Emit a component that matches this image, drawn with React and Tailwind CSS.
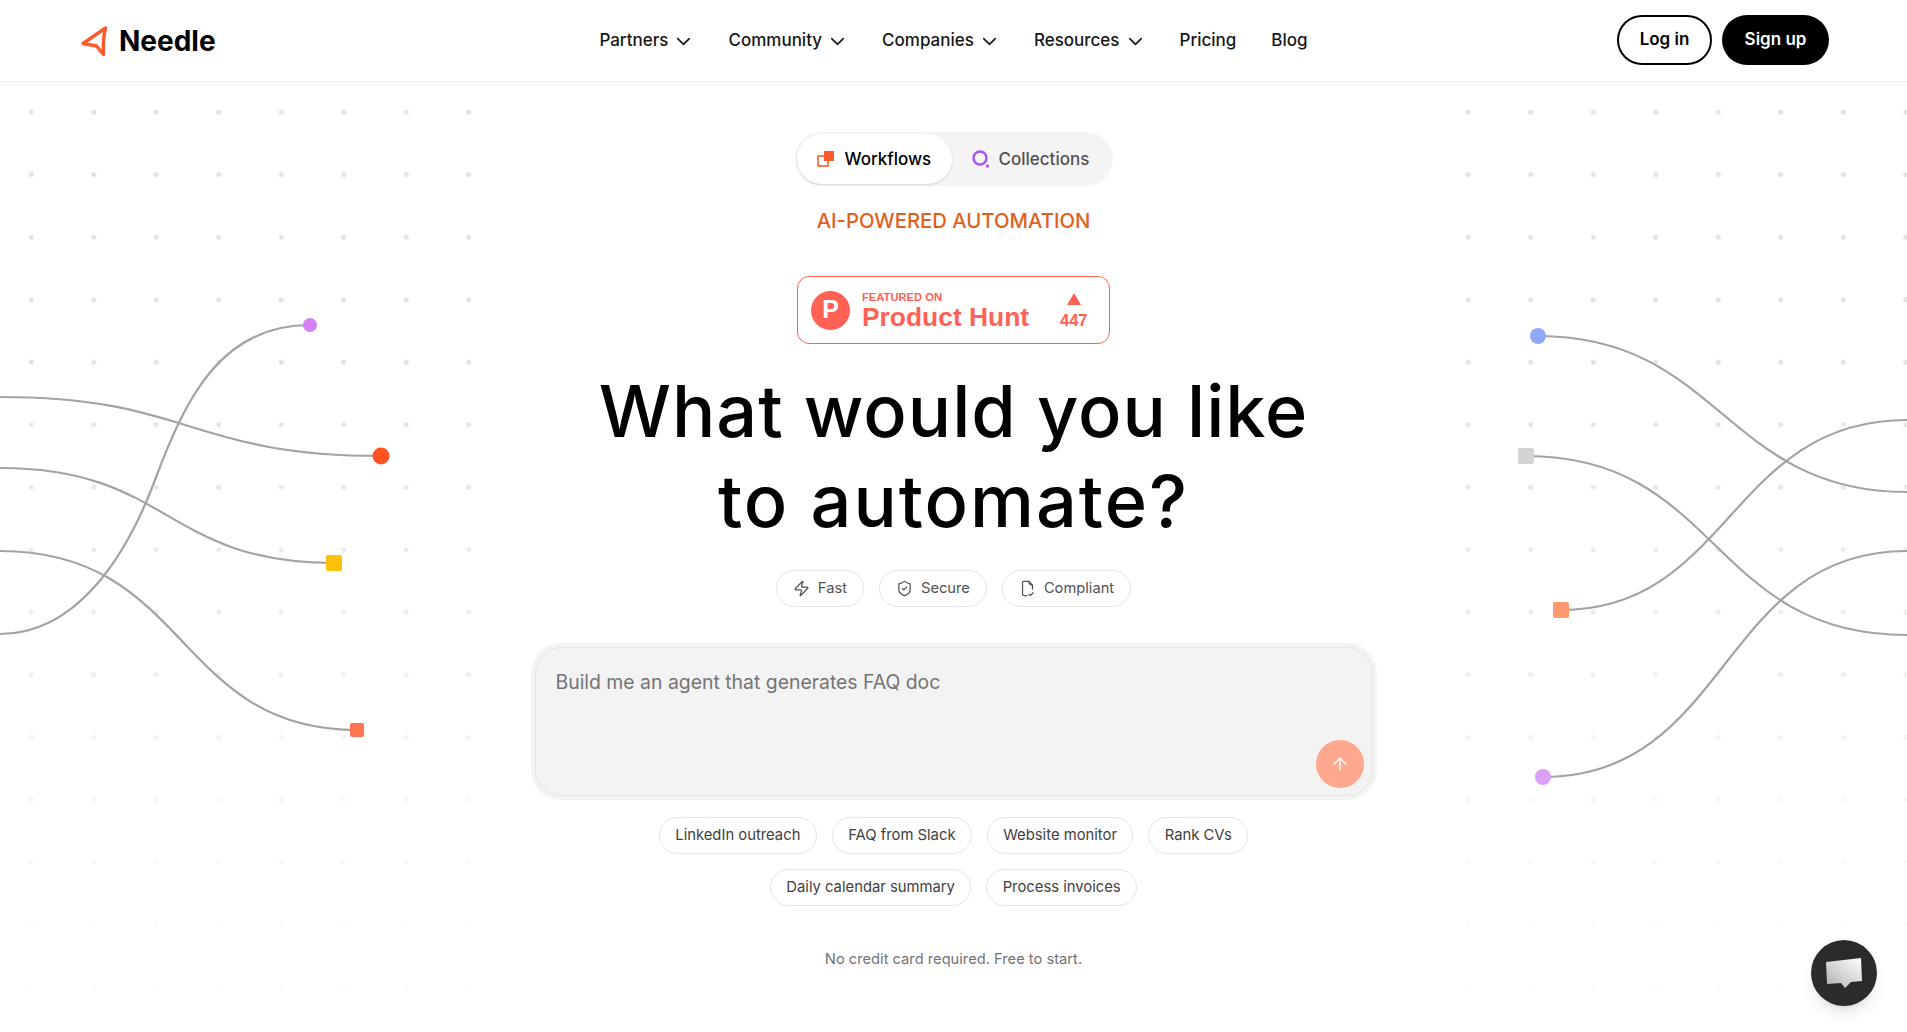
import { ChevronDown, ArrowUp, Zap, ShieldCheck } from 'lucide-react';

const navLinks = [
  { label: 'Partners', menu: true },
  { label: 'Community', menu: true },
  { label: 'Companies', menu: true },
  { label: 'Resources', menu: true },
  { label: 'Pricing' },
  { label: 'Blog' },
];

function FileChecked({ size }) {
  return (
    <svg width={size} height={size} viewBox="0 0 24 24" fill="none" stroke="currentColor" strokeWidth="1.75" strokeLinecap="round" strokeLinejoin="round">
      <path d="M11 22H7a2 2 0 0 1-2-2V4a2 2 0 0 1 2-2h7l5 5v6" />
      <path d="M14 2c0 3 1 5 5 5" />
      <path d="m14 20 2 2 4-4" />
    </svg>
  );
}

const features = [
  { label: 'Fast', icon: Zap },
  { label: 'Secure', icon: ShieldCheck },
  { label: 'Compliant', icon: FileChecked },
];

const promptRows = [
  ['LinkedIn outreach', 'FAQ from Slack', 'Website monitor', 'Rank CVs'],
  ['Daily calendar summary', 'Process invoices'],
];

function Curves() {
  return (
    <svg className="absolute left-0 top-0" width="1907" height="1032" viewBox="0 0 1907 1032" fill="none">
      <g stroke="#a3a3a3" strokeWidth="2.2">
        <path d="M0 634C75 634 125 560 155 480C185 400 220 325 310 325" />
        <path d="M0 397C190 397 190 456 381 456" />
        <path d="M0 468C170 468 165 563 334 563" />
        <path d="M0 551C190 551 175 730 357 730" />
        <path d="M1538 336C1720 336 1725 492 1907 492" />
        <path d="M1526 456C1720 456 1710 635 1907 635" />
        <path d="M1561 610C1730 610 1730 420 1907 420" />
        <path d="M1543 777C1730 777 1720 551 1907 551" />
      </g>
      <circle cx="310" cy="325" r="7" fill="#d580f7" />
      <circle cx="381" cy="456" r="8.5" fill="#ff5322" />
      <rect x="326" y="555" width="16" height="16" rx="2" fill="#ffc107" />
      <rect x="350" y="723" width="14" height="14" rx="2" fill="#ff7452" />
      <circle cx="1538" cy="336" r="8" fill="#8fa8fa" />
      <rect x="1518" y="448" width="16" height="16" rx="2" fill="#d4d4d4" />
      <rect x="1553" y="602" width="16" height="16" rx="2" fill="#ff9a70" />
      <circle cx="1543" cy="777" r="8" fill="#dca0fb" />
    </svg>
  );
}

export default function App() {
  return (
    <div className="relative h-[1032px] overflow-hidden bg-white font-['Inter',sans-serif] text-black">
      {/* dot grids */}
      <div className="absolute left-0 top-[81px] h-[951px] w-[490px] bg-[radial-gradient(circle,#e3e3e3_2.2px,transparent_2.8px)] bg-[size:62.5px_62.5px] [mask-image:linear-gradient(to_bottom,#000_30%,rgba(0,0,0,0.2)_85%,transparent_100%)]" />
      <div className="absolute right-0 top-[81px] h-[951px] w-[470px] bg-[radial-gradient(circle,#e3e3e3_2.2px,transparent_2.8px)] bg-[size:62.5px_62.5px] [mask-image:linear-gradient(to_bottom,#000_30%,rgba(0,0,0,0.2)_85%,transparent_100%)]" />
      <Curves />

      {/* Nav */}
      <header className="relative grid h-[82px] grid-cols-[1fr_auto_1fr] items-center border-b border-[#f2f2f2] bg-white pl-[80px] pr-[78px]">
        <div className="flex items-center gap-[11px]">
          <svg width="28" height="32" viewBox="0 0 28 32" fill="none">
            <path d="M25.5 3L3 18.5L16.5 21L23.5 29.5C23 21 23.5 11 25.5 3Z" stroke="#ff5a2c" strokeWidth="3.4" strokeLinejoin="round" />
          </svg>
          <span className="text-[28px] font-bold">Needle</span>
        </div>
        <nav className="mr-[2px] flex items-center gap-[35px] pt-[1px] text-[17px] font-medium text-[#171717]">
          {navLinks.map(link => (
            <a key={link.label} className="flex items-center gap-[4px]">
              {link.label}
              {link.menu && <ChevronDown size={23} strokeWidth={1.7} className="-mr-[2px]" />}
            </a>
          ))}
        </nav>
        <div className="mb-[1px] flex items-center justify-end gap-[10px] text-[17px] font-semibold">
          <button className="h-[50px] w-[95px] rounded-full border-2 border-black bg-white">Log in</button>
          <button className="h-[50px] w-[107px] rounded-full bg-black text-white">Sign up</button>
        </div>
      </header>

      <main className="relative flex flex-col items-center">
        {/* Tabs */}
        <div className="mt-[50px] flex h-[54px] w-[318px] items-center rounded-full bg-[#f4f4f5] p-[2px] text-[17px] font-medium">
          <div className="flex h-[50px] w-[155px] items-center gap-[10px] rounded-full bg-white pl-[20px] shadow-sm">
            <svg width="18" height="16" viewBox="0 0 18 16" fill="none">
              <rect x="1" y="5" width="10" height="10" stroke="#ff5a2c" strokeWidth="1.6" />
              <rect x="7" y="0" width="10" height="10" fill="#ff5a2c" />
            </svg>
            <span className="pt-[2px]">Workflows</span>
          </div>
          <div className="flex items-center gap-[9px] pl-[20px] text-[#525252]">
            <svg width="18" height="18" viewBox="0 0 18 18" fill="none">
              <circle cx="8" cy="8" r="6.5" stroke="#a855f7" strokeWidth="2.4" />
              <circle cx="15.5" cy="16" r="1.7" fill="#a855f7" />
            </svg>
            <span className="pt-[2px]">Collections</span>
          </div>
        </div>

        <p className="mt-[22px] text-[20.3px] font-medium leading-[26px] text-[#e0611d]">AI-POWERED AUTOMATION</p>

        {/* Product Hunt badge */}
        <div className="mt-[42px] flex h-[68px] w-[313px] items-center rounded-[12px] border-[1.5px] border-[#ff6154] bg-white pl-[13px] font-['Liberation_Sans',sans-serif] text-[#ff6154]">
          <div className="flex h-[39px] w-[39px] items-center justify-center rounded-full bg-[#ff6154] text-[25px] font-bold text-white">P</div>
          <div className="ml-[12px] flex w-[198px] flex-col pt-[2px]">
            <span className="text-[11.2px] font-bold leading-[11px]">FEATURED ON</span>
            <span className="mt-[1px] text-[26.4px] font-bold leading-[27px]">Product Hunt</span>
          </div>
          <div className="flex flex-col items-center pt-[2px]">
            <div className="h-0 w-0 border-x-[7px] border-b-[12px] border-x-transparent border-b-[#ff6154]" />
            <span className="mt-[6px] text-[16.5px] font-bold leading-[18px]">447</span>
          </div>
        </div>

        <h1 className="mt-[22px] text-center text-[72px] font-[450] leading-[90px] tracking-[1px]">
          What would you like
          <br />
          <span className="tracking-[2px]">to automate?</span>
        </h1>

        {/* Features */}
        <div className="mt-[24px] flex gap-[15px]">
          {features.map(({ label, icon: Icon }) => (
            <div key={label} className="flex h-[37px] items-center gap-[8px] rounded-full border border-[#e5e5e5] bg-white px-[16px] text-[14.7px] text-[#525252]">
              <Icon size={17} strokeWidth={1.75} />
              {label}
            </div>
          ))}
        </div>

        {/* Prompt box */}
        <div className="mt-[36px] h-[157px] w-[846px] rounded-[30px] bg-[#f4f4f4] p-[4px]">
          <div className="relative h-full rounded-[26px] border border-[#e5e5e5] bg-[#f3f3f3] pl-[20px] pt-[20px] text-[19.4px] leading-[28px] text-[#737373]">
            Build me an agent that generates FAQ doc
            <button className="absolute bottom-[7px] right-[8px] flex h-[48px] w-[48px] items-center justify-center rounded-full bg-[#ffa78f] text-white">
              <ArrowUp size={20} strokeWidth={1.75} />
            </button>
          </div>
        </div>

        {/* Prompts */}
        <div className="mt-[17px] flex flex-col items-center gap-[15px]">
          {promptRows.map((row, i) => (
            <div key={i} className="flex gap-[15px]">
              {row.map(p => (
                <div key={p} className="flex h-[37px] items-center rounded-full border border-[#e5e5e5] bg-white px-[15.4px] text-[14.8px] text-[#404040]">
                  {p}
                </div>
              ))}
            </div>
          ))}
        </div>

        <p className="mt-[42px] text-[14.7px] leading-[22px] text-[#737373]">No credit card required. Free to start.</p>
      </main>

      {/* Chat bubble */}
      <button className="absolute bottom-[26px] right-[30px] flex h-[66px] w-[66px] items-center justify-center rounded-full bg-[#2b2b2b] shadow-lg">
        <svg width="38" height="34" viewBox="0 0 38 34">
          <defs>
            <linearGradient id="bubble" x1="1" y1="0" x2="0" y2="1">
              <stop offset="0" stopColor="#ffffff" />
              <stop offset="1" stopColor="#b0b0b0" />
            </linearGradient>
          </defs>
          <path d="M1 6L36 2L37 25L26 26L20 32L16 27L2 28Z" fill="url(#bubble)" />
        </svg>
      </button>
    </div>
  );
}
